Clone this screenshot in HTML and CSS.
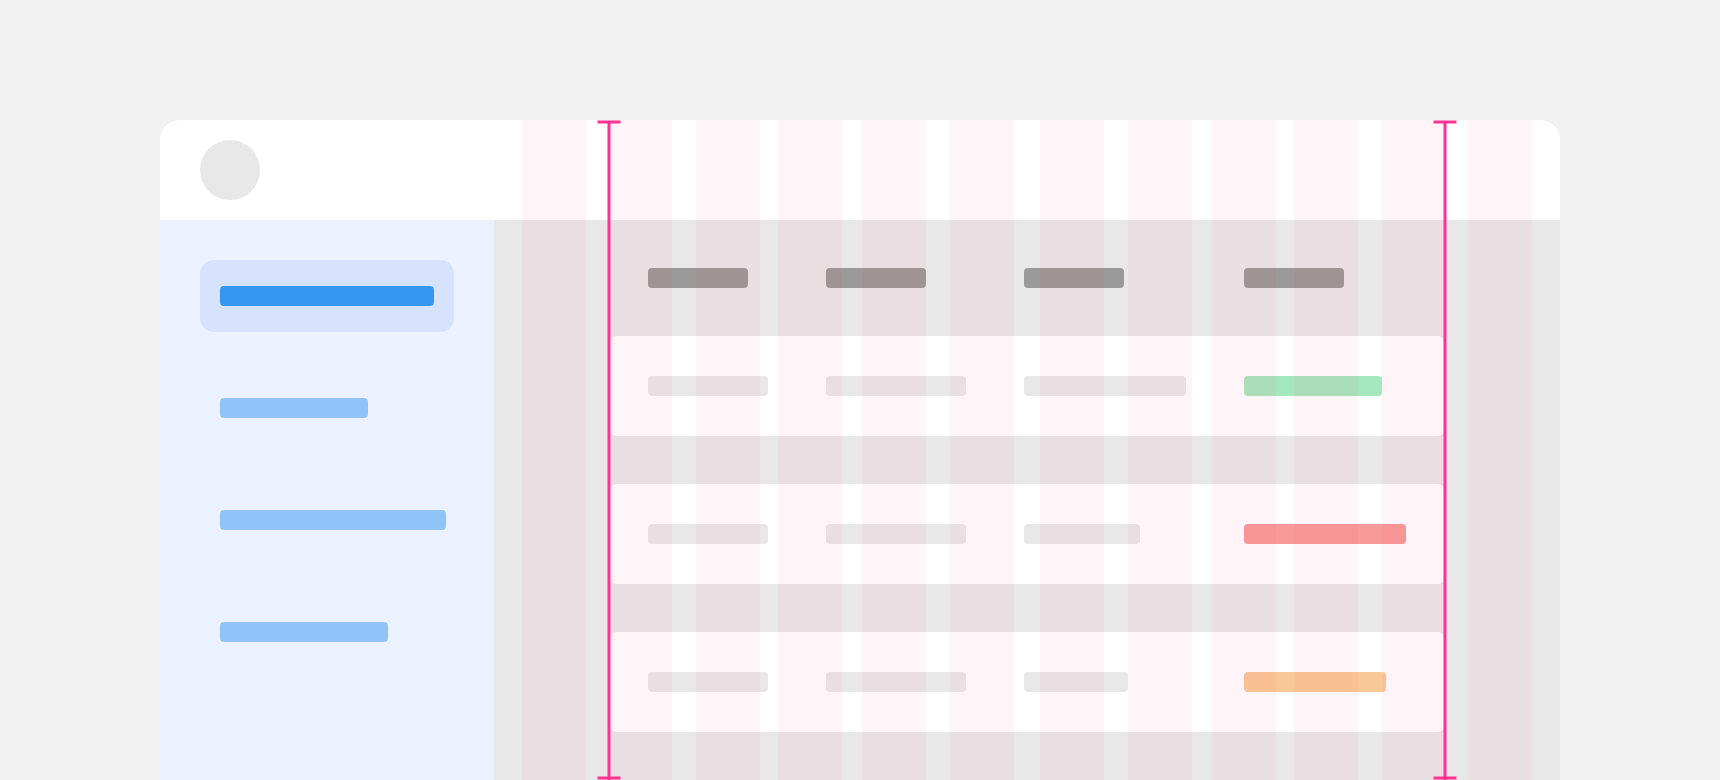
FILE: index.html
```html
<!DOCTYPE html>
<html lang="en">
<head>
<meta charset="utf-8">
<title>Table layout grid</title>
<link rel="stylesheet" href="styles.css">
</head>
<body>
<div class="frame">
  <header class="header"><div class="avatar"></div></header>
  <div class="body">
    <nav class="sidebar">
      <a class="item active" href="#" aria-label="Item 1"><span class="bar" style="width:214px"></span></a>
      <a class="item" href="#" aria-label="Item 2"><span class="bar" style="width:148px"></span></a>
      <a class="item" href="#" aria-label="Item 3"><span class="bar" style="width:226px"></span></a>
      <a class="item" href="#" aria-label="Item 4"><span class="bar" style="width:168px"></span></a>
    </nav>
    <main class="main">
      <table class="table">
        <colgroup><col class="c1"><col class="c2"><col class="c3"><col class="c4"></colgroup>
        <thead>
          <tr>
            <th><span class="bar"></span></th>
            <th><span class="bar"></span></th>
            <th><span class="bar"></span></th>
            <th><span class="bar"></span></th>
          </tr>
        </thead>
        <tbody>
          <tr>
            <td><span class="bar" style="width:120px"></span></td>
            <td><span class="bar" style="width:140px"></span></td>
            <td><span class="bar" style="width:162px"></span></td>
            <td><span class="bar green" style="width:138px"></span></td>
          </tr>
          <tr>
            <td><span class="bar" style="width:120px"></span></td>
            <td><span class="bar" style="width:140px"></span></td>
            <td><span class="bar" style="width:116px"></span></td>
            <td><span class="bar red" style="width:162px"></span></td>
          </tr>
          <tr>
            <td><span class="bar" style="width:120px"></span></td>
            <td><span class="bar" style="width:140px"></span></td>
            <td><span class="bar" style="width:104px"></span></td>
            <td><span class="bar orange" style="width:142px"></span></td>
          </tr>
        </tbody>
      </table>
    </main>
  </div>
  <div class="columns">
    <i></i><i></i><i></i><i></i><i></i><i></i><i></i><i></i><i></i><i></i><i></i><i></i>
  </div>
  <svg class="guide guide-left" width="24" height="100%">
    <path d="M.5 2h23"/><line x1="12" y1="2" x2="12" y2="100%"/>
    <svg y="100%" overflow="visible"><path d="M.5-2h23"/></svg>
  </svg>
  <svg class="guide guide-right" width="24" height="100%">
    <path d="M.5 2h23"/><line x1="12" y1="2" x2="12" y2="100%"/>
    <svg y="100%" overflow="visible"><path d="M.5-2h23"/></svg>
  </svg>
</div>
</body>
</html>
```
FILE: styles.css
```css
* { box-sizing: border-box; }

body {
  margin: 0;
  padding: 120px 160px 0;
  background: #f2f2f2;
  font-family: Inter, sans-serif;
}

.frame {
  position: relative;
  display: flex;
  flex-direction: column;
  min-height: calc(100vh - 120px);
  border-radius: 20px 20px 0 0;
  background: #fff;
}

.header {
  display: flex;
  align-items: center;
  padding: 20px 40px;
}

.avatar {
  width: 60px;
  height: 60px;
  border-radius: 50%;
  background: #e8e8e8;
}

.body {
  display: flex;
  flex: 1;
}

.sidebar {
  display: flex;
  flex-direction: column;
  flex: 0 0 334px;
  gap: 40px;
  min-width: 0;
  padding: 40px;
  background: #ebf1ff;
}

.bar {
  display: block;
  flex-shrink: 0;
  height: 20px;
  border-radius: 4px;
  background: #e8e8e8;
}

.item {
  display: flex;
  align-items: center;
  height: 72px;
  padding: 0 20px;
  border-radius: 14px;
}

.item .bar { background: #90c3f8; }
.active { background: #d7e2fd; }
.active .bar { background: #3697f3; }

.main {
  flex: 1;
  padding: 0 116px;
  background: #e8e8e8;
}

.table {
  width: 100%;
  table-layout: fixed;
  border-spacing: 0 48px;
}

.c1 { width: 178px; }
.c2 { width: 198px; }
.c3 { width: 220px; }
.c4 { width: 238px; }

th { padding: 0 0 0 38px; }
th .bar { width: 100px; background: #999a99; }

td {
  padding: 40px 0 40px 38px;
  background: #fff;
}

td:first-child { border-radius: 6px 0 0 6px; }
td:last-child { border-radius: 0 6px 6px 0; }

.green { background: #a5e8bd; }
.red { background: #f79a99; }
.orange { background: #f9c899; }

/* Twelve column overlay */
.columns {
  position: absolute;
  inset: 0 28px 0 362px;
  display: grid;
  grid-template-columns: 64px 22fr 64px 24fr 64px 18fr 64px 20fr 64px 24fr 64px 26fr 64px 24fr 64px 20fr 64px 18fr 64px 24fr 64px 22fr 64px;
  pointer-events: none;
}

.columns i {
  grid-row: 1;
  background: rgba(255, 51, 110, 0.054);
}

.columns i:nth-child(1) { grid-column: 1; }
.columns i:nth-child(2) { grid-column: 3; }
.columns i:nth-child(3) { grid-column: 5; }
.columns i:nth-child(4) { grid-column: 7; }
.columns i:nth-child(5) { grid-column: 9; }
.columns i:nth-child(6) { grid-column: 11; }
.columns i:nth-child(7) { grid-column: 13; }
.columns i:nth-child(8) { grid-column: 15; }
.columns i:nth-child(9) { grid-column: 17; }
.columns i:nth-child(10) { grid-column: 19; }
.columns i:nth-child(11) { grid-column: 21; }
.columns i:nth-child(12) { grid-column: 23; }

/* Container edge guides */
.guide {
  position: absolute;
  top: 0;
  stroke: #ff3392;
  stroke-width: 3px;
  pointer-events: none;
}

.guide-left { left: 437px; }
.guide-right { right: 103px; }
```
